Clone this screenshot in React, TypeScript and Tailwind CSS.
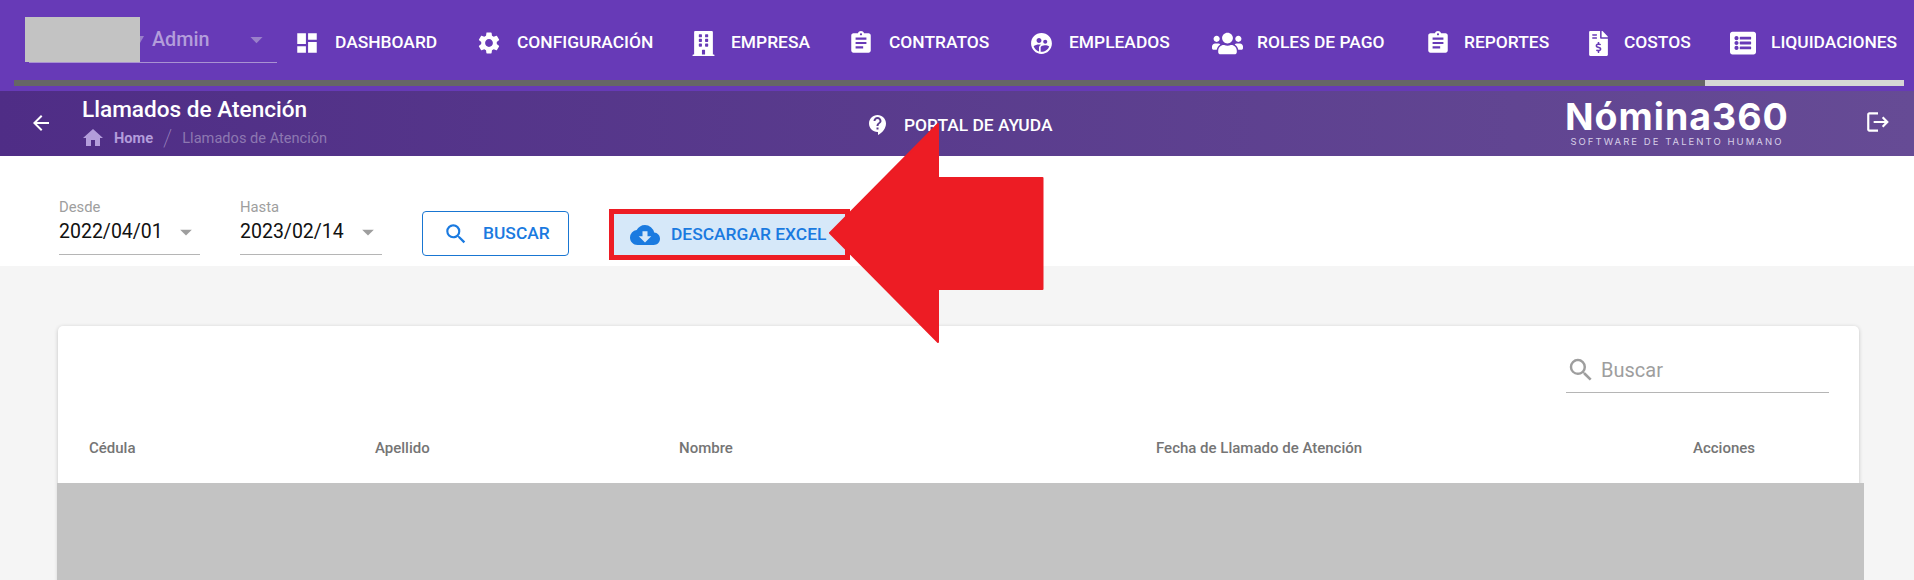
import { FaBuilding, FaFileInvoiceDollar, FaListAlt, FaUsers } from 'react-icons/fa'
import { MdArrowBack, MdArrowDropDown, MdAssignment, MdCloudDownload, MdContactSupport, MdDashboard, MdHome, MdLogout, MdSearch, MdSettings, MdSupervisedUserCircle } from 'react-icons/md'
import type { IconType } from 'react-icons'

const roboto = "font-['Roboto',sans-serif]"

const navItems: { label: string; icon: IconType; iconClass: string; itemClass: string }[] = [
  { label: 'DASHBOARD', icon: MdDashboard, iconClass: 'text-[26px]', itemClass: 'w-[182px]' },
  { label: 'CONFIGURACIÓN', icon: MdSettings, iconClass: 'text-[26px]', itemClass: 'w-[214px]' },
  { label: 'EMPRESA', icon: FaBuilding, iconClass: 'text-[25px]', itemClass: 'w-[158px]' },
  { label: 'CONTRATOS', icon: MdAssignment, iconClass: 'text-[26px]', itemClass: 'w-[180px]' },
  { label: 'EMPLEADOS', icon: MdSupervisedUserCircle, iconClass: 'text-[25px]', itemClass: 'w-[188px]' },
  { label: 'ROLES DE PAGO', icon: FaUsers, iconClass: 'text-[31px] -ml-[4px]', itemClass: 'w-[207px]' },
  { label: 'REPORTES', icon: MdAssignment, iconClass: 'text-[26px] ml-[3px]', itemClass: 'w-[160px]' },
  { label: 'COSTOS', icon: FaFileInvoiceDollar, iconClass: 'text-[25px] ml-[5px]', itemClass: 'w-[147px]' },
  { label: 'LIQUIDACIONES', icon: FaListAlt, iconClass: 'text-[26px]', itemClass: '' },
]

const columns = [
  { label: 'Cédula', className: 'w-[286px]' },
  { label: 'Apellido', className: 'w-[304px]' },
  { label: 'Nombre', className: 'w-[477px]' },
  { label: 'Fecha de Llamado de Atención', className: 'w-[537px]' },
  { label: 'Acciones', className: 'pt-[1px]' },
]

function DateField({ label, value, className }: { label: string; value: string; className: string }) {
  return (
    <div className={`flex flex-col border-b border-[#b5b5b5] h-[58px] ${className}`}>
      <span className="text-[14.8px] leading-[20px] text-[#9e9e9e]">{label}</span>
      <div className="flex items-center justify-between mt-[1px]">
        <span className="text-[19.5px] leading-[24px] text-[#111]">{value}</span>
        <MdArrowDropDown className="text-[28px] text-[#9e9e9e]" />
      </div>
    </div>
  )
}

export default function App() {
  return (
    <div className={`${roboto} relative w-[1914px] h-[580px] overflow-hidden bg-[#f5f5f5]`}>
      {/* top nav */}
      <header className="bg-[#673ab7] h-[91px] flex flex-col">
        <div className="h-[80px] flex items-start pl-[29px]">
          <div className="w-[248px] h-[46px] mt-[17px] border-b border-[#a992d2] flex items-center justify-end pl-[123px] pr-[6px] shrink-0">
            <span className="flex-1 text-[19.8px] font-medium text-[#b39ddb]">Admin</span>
            <MdArrowDropDown className="text-[29px] text-[#9a80ca]" />
          </div>
          <nav className="flex items-center h-[86px] ml-[18px]">
            {navItems.map((item) => (
              <div key={item.label} className={`flex items-center shrink-0 text-white ${item.itemClass}`}>
                <span className="w-[24px] flex justify-center shrink-0">
                  <item.icon className={`shrink-0 ${item.iconClass}`} />
                </span>
                <span className="ml-[16px] text-[17.4px] font-medium leading-none whitespace-nowrap">{item.label}</span>
              </div>
            ))}
          </nav>
        </div>
        <div className="h-[6px] ml-[14px] mr-[10px] bg-[#666] flex justify-end">
          <div className="w-[199px] bg-[#d6d6d6]" />
        </div>
      </header>

      {/* page title band */}
      <div className="h-[65px] bg-gradient-to-r from-[#4f2d86] to-[#664b95] flex items-center text-white">
        <MdArrowBack className="text-[24px] ml-[29px] mt-[-1px] shrink-0" />
        <div className="ml-[29px] w-[784px] shrink-0">
          <div className="text-[22.6px] font-medium leading-[26px] mt-[-1px]">Llamados de Atención</div>
          <div className="flex items-center text-[14.6px] leading-[20px] mt-[3px]">
            <MdHome className="text-[24px] text-[#b39ddb] -ml-[1px]" />
            <span className="ml-[9px] font-bold text-[#b39ddb]">Home</span>
            <span className="ml-[10px] text-[24px] leading-[20px] font-thin text-[#a48fc6]">/</span>
            <span className="ml-[10px] text-[#8d78b1]">Llamados de Atención</span>
          </div>
        </div>
        <MdContactSupport className="text-[24px] shrink-0 mt-[3px]" />
        <span className="ml-[14px] text-[17.4px] font-medium mt-[3px] whitespace-nowrap">PORTAL DE AYUDA</span>
        <div className="ml-[513px] w-[223px] shrink-0 flex flex-col items-center mt-[-1px]">
          <span className="font-['Inter',sans-serif] text-[37.5px] font-bold leading-[33px] tracking-[1px]">Nómina360</span>
          <span className="font-['Inter',sans-serif] text-[9.5px] leading-[10px] tracking-[2.05px] mt-[4px] text-[#d8cfe8] whitespace-nowrap">SOFTWARE DE TALENTO HUMANO</span>
        </div>
        <MdLogout className="text-[26px] ml-[77px] mt-[-3px] shrink-0" />
      </div>

      {/* filters */}
      <div className="h-[110px] bg-white flex items-start pl-[59px] pt-[44px]">
        <DateField label="Desde" value="2022/04/01" className="w-[141px] mt-[-3px]" />
        <DateField label="Hasta" value="2023/02/14" className="w-[142px] ml-[40px] mt-[-3px]" />
        <button className="ml-[40px] mt-[11px] w-[147px] h-[45px] border border-[#1976d2] rounded-[4px] flex items-center pl-[20px] text-[#1a7ae0]">
          <MdSearch className="text-[26px]" />
          <span className="ml-[14px] text-[17.4px] font-medium">BUSCAR</span>
        </button>
        <button className="ml-[40px] mt-[9px] w-[241px] h-[51px] border-[5px] border-[#ed1c24] bg-[#d6e8f9] flex items-center pl-[16px] text-[#1a7ae0]">
          <MdCloudDownload className="text-[30px]" />
          <span className="ml-[11px] text-[17.4px] font-medium whitespace-nowrap">DESCARGAR EXCEL</span>
        </button>
      </div>

      {/* table card */}
      <main className="px-[58px] pt-[60px] pr-[55px]">
        <div className="bg-white rounded-[5px] shadow-[0_1px_4px_rgba(0,0,0,0.2)] h-[300px]">
          <div className="flex justify-end pt-[24px] pr-[30px]">
            <div className="w-[263px] h-[43px] border-b border-[#b5b5b5] flex items-center pb-[2px]">
              <MdSearch className="text-[30px] text-[#9e9e9e]" />
              <span className="ml-[5px] text-[20px] text-[#9e9e9e]">Buscar</span>
            </div>
          </div>
          <div className="flex items-center pl-[31px] pt-[43px] text-[15px] font-medium text-[#757575]">
            {columns.map((col) => (
              <span key={col.label} className={`whitespace-nowrap ${col.className}`}>{col.label}</span>
            ))}
          </div>
        </div>
      </main>

      {/* redactions and the annotation arrow sit over the screenshot */}
      <div className="absolute left-[25px] top-[17px] w-[115px] h-[45px] bg-[#c3c3c3]" />
      <div className="absolute left-[57px] top-[483px] w-[1807px] h-[97px] bg-[#c3c3c3]" />
      <svg className="absolute left-0 top-0 pointer-events-none" width="1914" height="580" viewBox="0 0 1914 580">
        <path d="M140 36 H144 L140 43 Z" fill="#9a80ca" />
        <path d="M830 233 L938 124 V178 H1042.5 V289 H938 V342 Z" fill="#ed1c24" stroke="#ed1c24" strokeWidth="2" strokeLinejoin="round" />
      </svg>
    </div>
  )
}
